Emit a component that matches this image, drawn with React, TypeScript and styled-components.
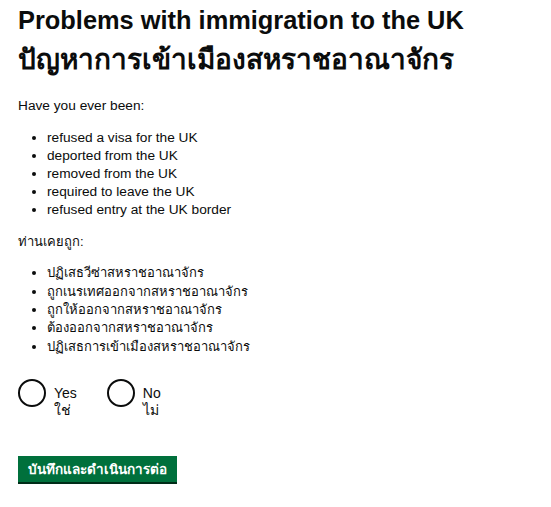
import React from 'react';
import styled, { createGlobalStyle } from 'styled-components';

const GlobalStyle = createGlobalStyle`
  body {
    margin: 0;
    background: #ffffff;
    color: #0b0c0c;
    font-family: "Liberation Sans", Arial, sans-serif;
  }
`;

const Page = styled.main`
  padding: 0 18px 20px 18px;
`;

const Heading = styled.h1`
  margin: 0 0 16px 0;
  font-weight: 700;
`;

const Line = styled.span<{ $thai?: boolean }>`
  display: block;
  font-size: ${(p) => (p.$thai ? '28px' : '25.4px')};
  line-height: 40px;
`;

const Lead = styled.p<{ $thai?: boolean }>`
  margin: 0 0 ${(p) => (p.$thai ? '12px' : '13px')} 0;
  font-size: ${(p) => (p.$thai ? '13px' : '13.7px')};
  line-height: 20px;
`;

const List = styled.ul<{ $thai?: boolean }>`
  margin: 0 0 ${(p) => (p.$thai ? '0' : '13px')} 0;
  padding-left: 29px;
  font-size: ${(p) => (p.$thai ? '13px' : '13.7px')};
  line-height: ${(p) => (p.$thai ? '18.3px' : '18.1px')};
`;

const RadioGroup = styled.div`
  display: flex;
  gap: 30px;
  margin-top: 22px;
`;

const RadioItem = styled.label`
  display: flex;
  align-items: flex-start;
  gap: 8px;
`;

const Circle = styled.span`
  width: 28px;
  height: 28px;
  box-sizing: border-box;
  border: 2px solid #0b0c0c;
  border-radius: 50%;
  margin-top: 1px;
`;

const RadioLabel = styled.span`
  font-size: 14px;
  line-height: 17px;
  padding-top: 7px;
`;

const Button = styled.button`
  margin-top: 37px;
  width: 159px;
  height: 26px;
  border: 0;
  background: #00703c;
  box-shadow: 0 2px 0 #002d18;
  color: #ffffff;
  font-family: "Liberation Sans", Arial, sans-serif;
  font-size: 13.5px;
  font-weight: 700;
  padding: 0;
  display: flex;
  align-items: center;
  justify-content: center;
`;

const englishItems = [
  'refused a visa for the UK',
  'deported from the UK',
  'removed from the UK',
  'required to leave the UK',
  'refused entry at the UK border',
];

const thaiItems = [
  'ปฏิเสธวีซ่าสหราชอาณาจักร',
  'ถูกเนรเทศออกจากสหราชอาณาจักร',
  'ถูกให้ออกจากสหราชอาณาจักร',
  'ต้องออกจากสหราชอาณาจักร',
  'ปฏิเสธการเข้าเมืองสหราชอาณาจักร',
];

export default function App() {
  return (
    <>
      <GlobalStyle />
      <Page>
        <Heading>
          <Line>Problems with immigration to the UK</Line>
          <Line $thai>ปัญหาการเข้าเมืองสหราชอาณาจักร</Line>
        </Heading>
        <Lead>Have you ever been:</Lead>
        <List>
          {englishItems.map((item) => (
            <li key={item}>{item}</li>
          ))}
        </List>
        <Lead $thai>ท่านเคยถูก:</Lead>
        <List $thai>
          {thaiItems.map((item) => (
            <li key={item}>{item}</li>
          ))}
        </List>
        <RadioGroup>
          <RadioItem>
            <Circle />
            <RadioLabel>
              Yes
              <br />
              ใช่
            </RadioLabel>
          </RadioItem>
          <RadioItem>
            <Circle />
            <RadioLabel>
              No
              <br />
              ไม่
            </RadioLabel>
          </RadioItem>
        </RadioGroup>
        <Button>บันทึกและดำเนินการต่อ</Button>
      </Page>
    </>
  );
}
